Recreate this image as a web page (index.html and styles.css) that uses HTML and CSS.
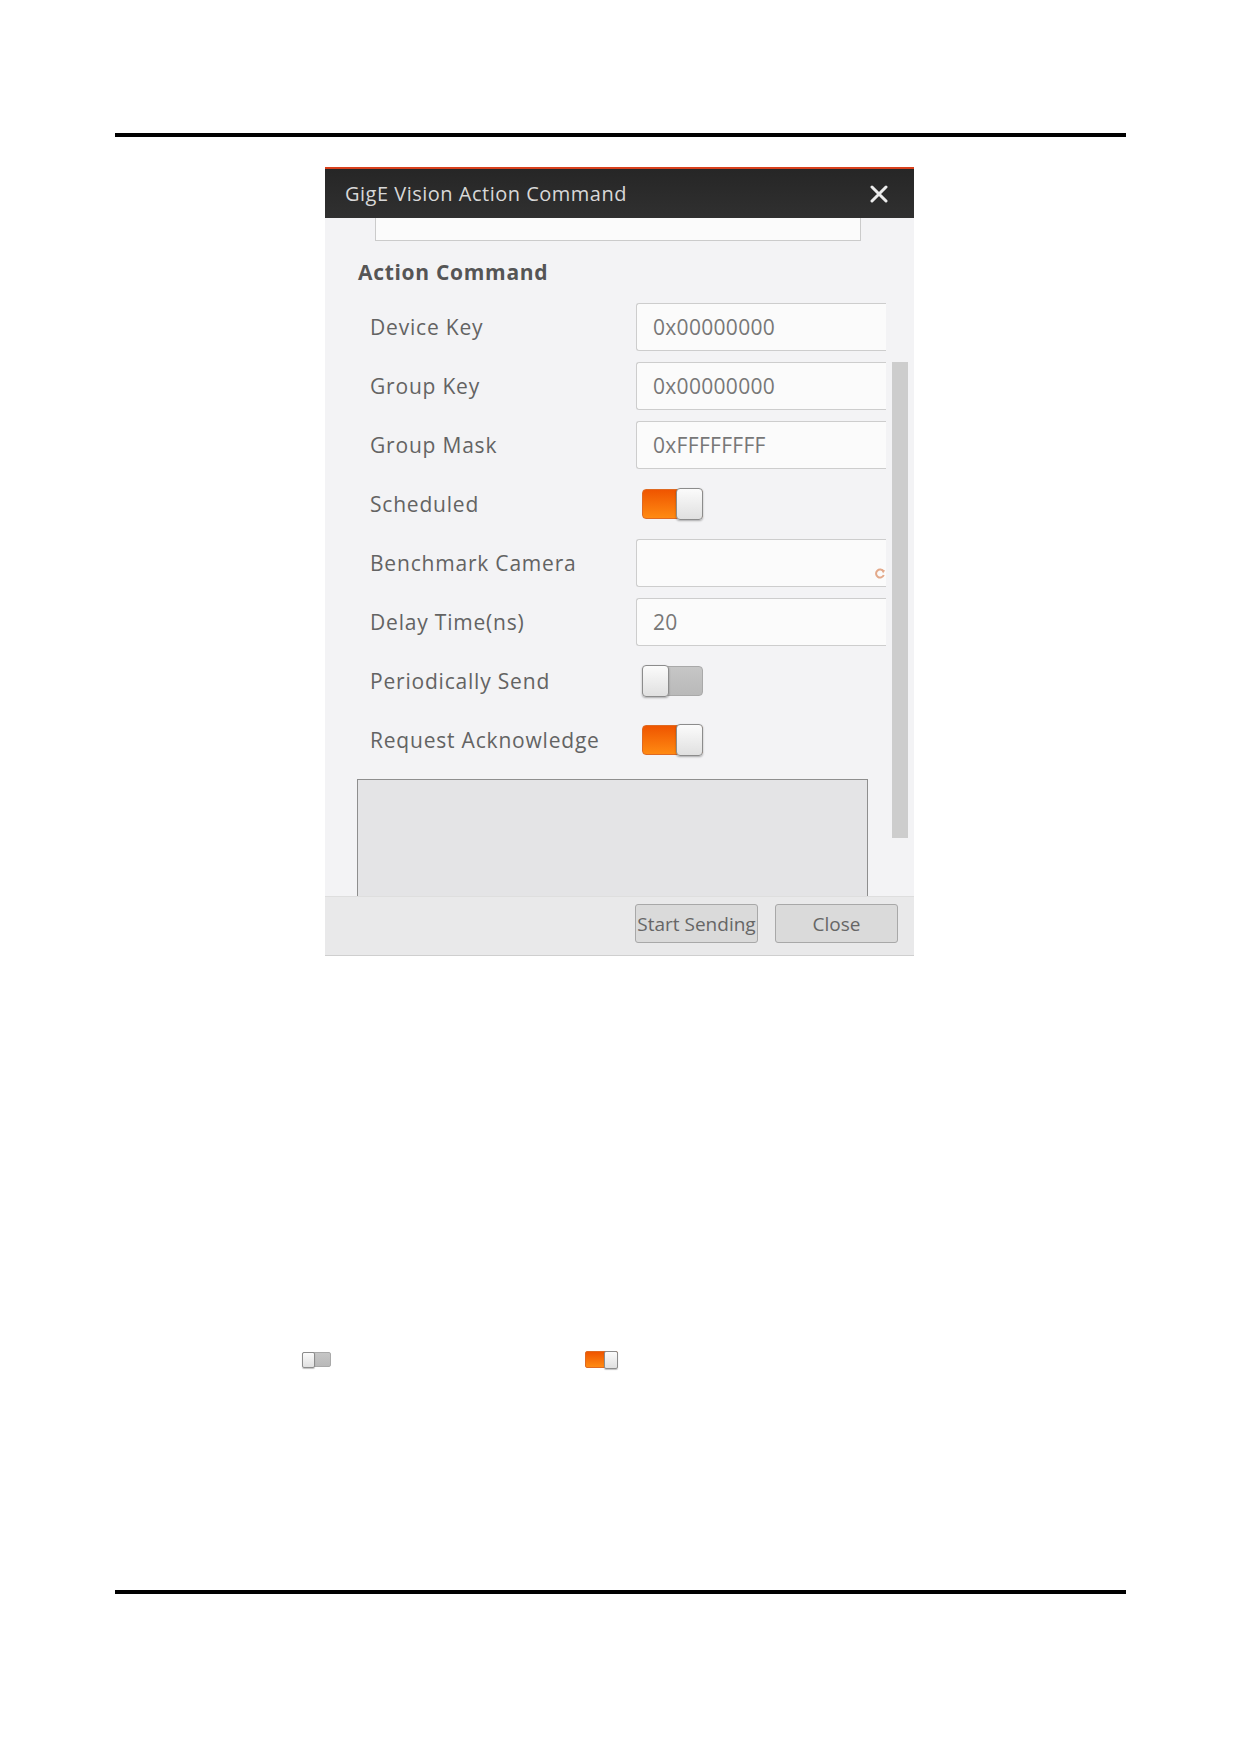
FILE: index.html
```html
<!DOCTYPE html>
<html lang="en">
<head>
  <meta charset="UTF-8">
  <title>GigE Vision Action Command</title>
  <link rel="stylesheet" href="styles.css">
</head>
<body>
  <div class="page">
    <div class="rule"></div>

    <div class="dialog">
      <div class="titlebar">
        <span class="title">GigE Vision Action Command</span>
        <svg class="close-x" width="18" height="18" viewBox="0 0 18 18">
          <path d="M2 2 L16 16 M16 2 L2 16" stroke="#ececec" stroke-width="3" stroke-linecap="round"/>
        </svg>
      </div>

      <div class="dlg-body">
        <div class="content">
          <div class="top-box"></div>
          <div class="section-title">Action Command</div>

          <div class="rows">
            <div class="row">
              <span class="label">Device Key</span>
              <div class="field">0x00000000</div>
            </div>
            <div class="row">
              <span class="label">Group Key</span>
              <div class="field">0x00000000</div>
            </div>
            <div class="row">
              <span class="label">Group Mask</span>
              <div class="field">0xFFFFFFFF</div>
            </div>
            <div class="row">
              <span class="label">Scheduled</span>
              <div class="switch on"><span class="knob"></span></div>
            </div>
            <div class="row">
              <span class="label">Benchmark Camera</span>
              <div class="field combo">
                <svg class="refresh" width="12" height="14" viewBox="0 0 12 14">
                  <path d="M9.5 5.5 A4 4 0 1 0 9.8 9" fill="none" stroke="#e3a98a" stroke-width="2"/>
                  <path d="M7.5 3 L11 4.5 L9 7.5 Z" fill="#e3a98a"/>
                </svg>
              </div>
            </div>
            <div class="row">
              <span class="label">Delay Time(ns)</span>
              <div class="field">20</div>
            </div>
            <div class="row">
              <span class="label">Periodically Send</span>
              <div class="switch"><span class="knob"></span></div>
            </div>
            <div class="row">
              <span class="label">Request Acknowledge</span>
              <div class="switch on"><span class="knob"></span></div>
            </div>
          </div>

          <div class="log-box"></div>
        </div>
        <div class="scroll">
          <div class="thumb"></div>
        </div>
      </div>

      <div class="footer">
        <button class="btn">Start Sending</button>
        <button class="btn">Close</button>
      </div>
    </div>

    <div class="legend">
      <div class="switch mini"><span class="knob"></span></div>
      <div class="switch mini on"><span class="knob"></span></div>
    </div>

    <div class="rule bottom"></div>
  </div>
</body>
</html>
```

FILE: styles.css
```css
body {
  margin: 0;
  background: #ffffff;
  font-family: 'Open Sans', 'Noto Sans', sans-serif;
}
.page {
  width: 1241px;
  padding-top: 133px;
}
.rule {
  height: 4px;
  background: #000;
  margin: 0 115px;
}
.rule.bottom {
  margin-top: 222px;
}

/* dialog */
.dialog {
  width: 589px;
  margin: 30px 0 0 325px;
  border-bottom: 1px solid #cfcfcf;
}
.titlebar {
  height: 49px;
  border-top: 2px solid #d8401c;
  background: linear-gradient(#262626, #303030);
  display: flex;
  align-items: center;
  justify-content: space-between;
  padding: 0 26px 0 20px;
}
.title {
  color: #d8d8d8;
  font-size: 20px;
  letter-spacing: 0.5px;
}
.dlg-body {
  height: 678px;
  display: flex;
  background: #f3f3f5;
}
.content {
  width: 561px;
  height: 100%;
  overflow: hidden;
}
.top-box {
  width: 486px;
  height: 23px;
  box-sizing: border-box;
  margin-left: 50px;
  background: #fbfbfb;
  border: 1px solid #cbcbcb;
  border-top: none;
}
.section-title {
  margin: 16px 0 0 33px;
  line-height: 30px;
  font-size: 21px;
  font-weight: bold;
  color: #555;
  letter-spacing: 0.7px;
}
.rows {
  margin-top: 10px;
}
.row {
  height: 59px;
  display: flex;
  align-items: center;
  padding-left: 45px;
}
.label {
  width: 266px;
  font-size: 21px;
  color: #636363;
  letter-spacing: 0.8px;
}
.field {
  width: 250px;
  height: 48px;
  box-sizing: border-box;
  background: #fbfbfb;
  border: 1px solid #cdcdcd;
  border-right: none;
  border-radius: 3px 0 0 3px;
  padding-left: 16px;
  display: flex;
  align-items: center;
  font-size: 21px;
  color: #777;
  letter-spacing: 0.3px;
}
.field.combo {
  justify-content: flex-end;
  align-items: flex-end;
  padding-bottom: 6px;
}
.log-box {
  width: 511px;
  height: 130px;
  box-sizing: border-box;
  margin: 10px 0 0 32px;
  background: #e4e4e6;
  border: 1px solid #8e8e8e;
}
.scroll {
  width: 16px;
  margin-left: 6px;
}
.thumb {
  margin-top: 144px;
  height: 476px;
  background: #cdcdcd;
}

/* switches */
.switch {
  width: 61px;
  height: 30px;
  box-sizing: border-box;
  margin-left: 6px;
  display: flex;
  align-items: center;
  border-radius: 4px;
  background: linear-gradient(#c6c6c6, #b9b9b9);
  border: 1px solid #a9a9a9;
}
.switch.on {
  justify-content: flex-end;
  background: linear-gradient(#ef5500, #ff8a12);
  border-color: #df6a22;
}
.knob {
  width: 27px;
  height: 32px;
  box-sizing: border-box;
  margin: 0 -1px;
  border: 1px solid #8c8c8c;
  border-radius: 4px;
  background: linear-gradient(#fbfbfb, #e0e0e0);
  box-shadow: 0 1px 2px rgba(0,0,0,0.3);
}

/* footer */
.footer {
  height: 59px;
  box-sizing: border-box;
  background: #e9e9ea;
  border-top: 1px solid #dedede;
  display: flex;
  justify-content: flex-end;
  gap: 17px;
  padding: 7px 16px 0 0;
}
.btn {
  width: 123px;
  height: 39px;
  padding: 0;
  background: #dadada;
  border: 1px solid #a8a8a8;
  border-radius: 3px;
  font-family: 'Open Sans', 'Noto Sans', sans-serif;
  font-size: 19px;
  color: #666;
}

/* small legend switches */
.legend {
  display: flex;
  align-items: center;
  margin: 395px 0 0 302px;
  height: 17px;
}
.switch.mini {
  width: 29px;
  height: 15px;
  margin-left: 0;
  border-radius: 2px;
}
.switch.mini.on {
  width: 33px;
  height: 17px;
  margin-left: 254px;
}
.switch.mini .knob {
  width: 13px;
  height: 16px;
  border-radius: 2px;
  box-shadow: 0 1px 1px rgba(0,0,0,0.25);
}
.switch.mini.on .knob {
  width: 14px;
  height: 18px;
}
```
